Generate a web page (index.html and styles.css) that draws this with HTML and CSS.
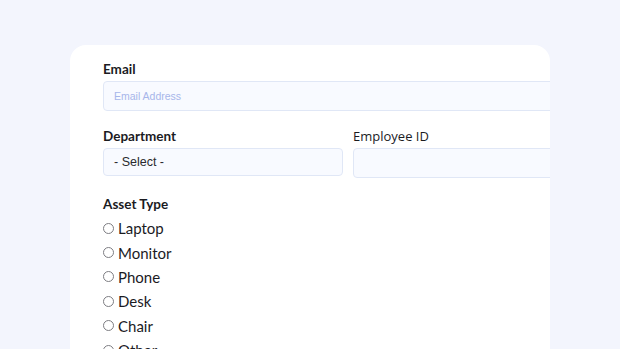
FILE: index.html
```html
<!doctype html>
<html>
<head>
<title>Asset Request</title>
<meta charset="utf-8" />
<meta name="viewport" content="width=device-width, initial-scale=1" />
<link rel="stylesheet" href="styles.css">
</head>
<body>
<main class="card">
<form class="form" action="#">
<div class="field">
<label class="label" for="email">Email</label>
<input class="input" type="text" id="email" name="email" placeholder="Email Address" />
</div>

<div class="row">
<div class="field">
<label class="label" for="dept">Department</label>
<div class="select">- Select -</div>
</div>
<div class="field">
<label class="label label-alt" for="empid">Employee ID</label>
<input class="input" type="text" id="empid" name="empid" />
</div>
</div>

<div class="field">
<span class="label">Asset Type</span>
<div class="radios">
<label class="radio"><span class="dot"></span>Laptop</label>
<label class="radio"><span class="dot"></span>Monitor</label>
<label class="radio"><span class="dot"></span>Phone</label>
<label class="radio"><span class="dot"></span>Desk</label>
<label class="radio"><span class="dot"></span>Chair</label>
<label class="radio"><span class="dot"></span>Other</label>
</div>
</div>
</form>
</main>
</body>
</html>
```

FILE: styles.css
```css
body {
background-color: #f3f5fd;
margin: 0;
padding: 45px 0 0 70px;
height: 349px;
box-sizing: border-box;
overflow: hidden;
font-family: "Lato", "Noto Sans", sans-serif;
color: #1b1b1f;
}

.card {
width: 447px;
height: 304px;
background-color: #fff;
border-radius: 16px 16px 0 0;
padding: 15px 0 0 33px;
overflow: hidden;
}

.form {
width: 500px;
}

.field {
margin-bottom: 16px;
}

.label {
display: block;
font-size: 13.5px;
font-weight: 700;
line-height: 18px;
margin-bottom: 3px;
}

.label-alt {
font-family: "Open Sans", "Noto Sans", sans-serif;
font-weight: 500;
font-size: 13px;
}

.input, .select {
box-sizing: border-box;
display: block;
width: 100%;
height: 30px;
padding: 0 10px;
background-color: #f8faff;
border: 1px solid #e0e7f6;
border-radius: 4px;
font-family: "Liberation Sans", Arial, sans-serif;
font-size: 10.5px;
outline: none;
}

.input::placeholder {
color: #a7b6ea;
}

.select {
height: 28px;
line-height: 26px;
font-size: 12.5px;
color: #2a2a2e;
}

.row {
display: grid;
grid-template-columns: 240px 240px;
column-gap: 10px;
margin-bottom: 1px;
}

.radios {
display: flex;
flex-direction: column;
margin-top: 3px;
}

.radio {
display: flex;
align-items: center;
gap: 4px;
height: 24.4px;
font-size: 15px;
}

.dot {
box-sizing: border-box;
width: 11px;
height: 11px;
border: 1px solid #7d7d82;
border-radius: 50%;
}
```
